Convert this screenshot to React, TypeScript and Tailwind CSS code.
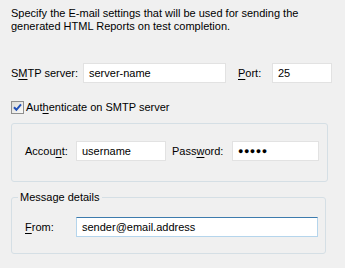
import React from "react";

const font = { fontFamily: '"Liberation Sans", Arial, sans-serif' };

function U({ children }: { children: React.ReactNode }) {
  return <span className="underline underline-offset-[2px]">{children}</span>;
}

function TextBox({ value, width, focused = false }: { value: React.ReactNode; width: string; focused?: boolean }) {
  return (
    <div
      className={`${width} h-[20px] bg-white border flex items-center pl-[5px] ${
        focused ? "border-[#b5d5ec] border-t-[#3d7bad]" : "border-[#e2e2e2]"
      }`}
    >
      {value}
    </div>
  );
}

function CheckBox() {
  return (
    <div className="w-[13px] h-[13px] border border-[#8f8f8f] bg-gradient-to-br from-[#dcdcd7] to-[#fafaf9] flex items-center justify-center">
      <svg width="9" height="9" viewBox="0 0 9 9">
        <path d="M1 4.2 L3.4 6.8 L8 1.4" fill="none" stroke="#2150b8" strokeWidth="2" />
      </svg>
    </div>
  );
}

export default function App() {
  return (
    <div className="w-[345px] h-[268px] bg-[#f0f0f0] text-black text-[11px] leading-[13px]" style={font}>
      <p className="pt-[7px] pl-[11px]">
        Specify the E-mail settings that will be used for sending the
        <br />
        generated HTML Reports on test completion.
      </p>

      <div className="mt-[30px] pl-[11px] flex items-center">
        <span className="w-[72px]">
          S<U>M</U>TP server:
        </span>
        <TextBox value="server-name" width="w-[143px]" />
        <span className="ml-[12px] w-[34px]">
          <U>P</U>ort:
        </span>
        <TextBox value="25" width="w-[60px]" />
      </div>

      <div className="mt-[18px] pl-[11px] flex items-center">
        <CheckBox />
        <span className="ml-[2px]">
          Aut<U>h</U>enticate on SMTP server
        </span>
      </div>

      <div className="mt-[9px] ml-[11px] w-[317px] h-[59px] border border-[#d5dfe5] rounded-[3px] pt-[17px] pl-[13px] flex items-start">
        <div className="flex items-center">
          <span className="w-[51px]">
            Accou<U>n</U>t:
          </span>
          <TextBox value="username" width="w-[90px]" />
          <span className="ml-[6px] w-[60px]">
            Pass<U>w</U>ord:
          </span>
          <TextBox value={<span className="text-[9px] tracking-[0.5px]">●●●●●</span>} width="w-[87px]" />
        </div>
      </div>

      <div className="relative mt-[15px] ml-[11px] w-[315px] h-[57px] border border-[#d5dfe5] rounded-[3px] pt-[19px] pl-[13px]">
        <span className="absolute -top-[7px] left-[6px] px-[2px] bg-[#f0f0f0]">Message details</span>
        <div className="flex items-center">
          <span className="w-[51px]">
            <U>F</U>rom:
          </span>
          <TextBox value="sender@email.address" width="w-[242px]" focused />
        </div>
      </div>
    </div>
  );
}
